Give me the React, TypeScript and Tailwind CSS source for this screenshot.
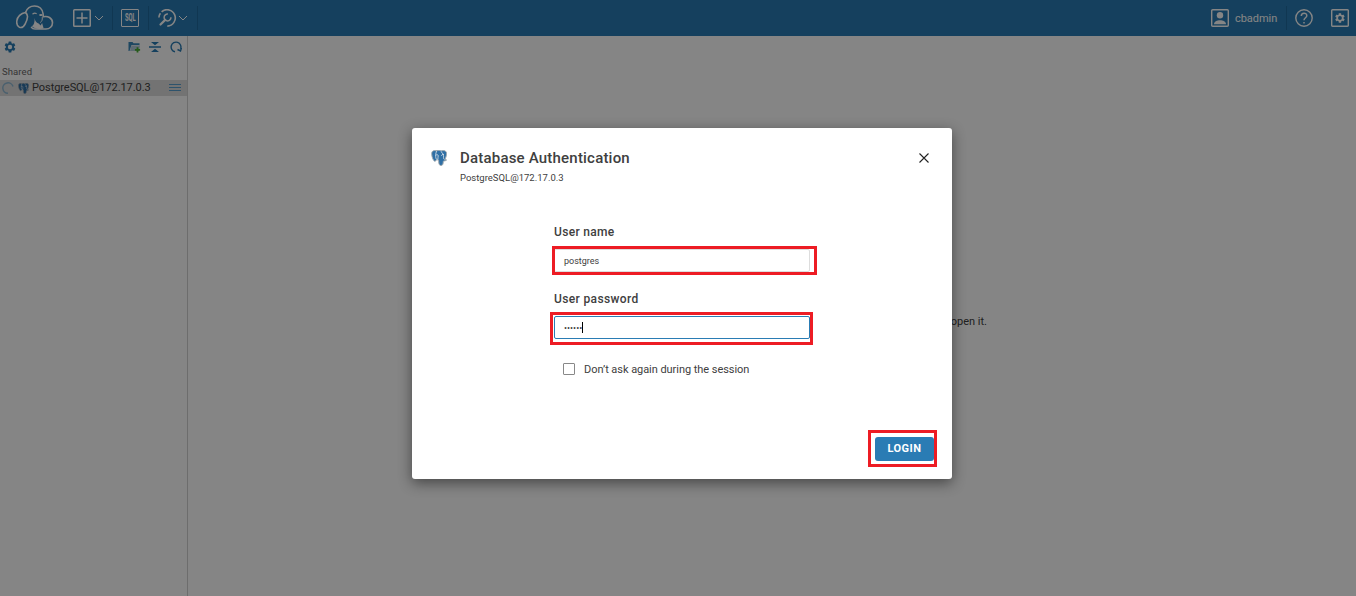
import React from 'react';

const GEAR =
  'M19.4 13c.04-.3.06-.6.06-1s-.02-.7-.07-1l2.1-1.6a.5.5 0 0 0 .12-.64l-2-3.46a.5.5 0 0 0-.6-.22l-2.5 1a7.3 7.3 0 0 0-1.7-.98l-.37-2.65A.5.5 0 0 0 14 2h-4a.5.5 0 0 0-.5.42L9.12 5.1a7.6 7.6 0 0 0-1.7.98l-2.48-1a.5.5 0 0 0-.6.22l-2 3.46a.5.5 0 0 0 .12.64L4.57 11a8 8 0 0 0 0 2l-2.1 1.65a.5.5 0 0 0-.13.64l2 3.46c.12.22.39.3.6.22l2.5-1c.52.4 1.08.73 1.7.98l.37 2.65c.04.24.25.4.5.4h4c.24 0 .45-.17.48-.4l.38-2.65a7.3 7.3 0 0 0 1.7-.98l2.48 1c.22.08.48 0 .6-.22l2-3.46a.5.5 0 0 0-.12-.64zM12 16a4 4 0 1 1 0-8 4 4 0 0 1 0 8z';

function Logo() {
  return (
    <svg width="38" height="26" viewBox="0 0 38 26" fill="none" stroke="#fff" strokeWidth="1.6" strokeLinecap="round" strokeLinejoin="round">
      <path d="M9.500 7.500C11 3.500 14.500 1 18.500 1c4.700 0 8 3.200 8.600 7.800l.1 3c4.500-1.300 9.300 1.300 9.300 6 0 3.700-2.900 6.200-6.500 6.200H19c-1.600 0-2.800-.5-3.500-1.600" />
      <path d="M9.500 7.500C5 8.200 1.200 11.500.8 16c-.3 3 .7 5.500 2.600 6.200 2.400.8 4.600-.8 5.800-3.400 1.200-2.400 2.400-4.800 2.300-7.300-.1-1.500-.7-3-2-4" />
      <path d="M17 8.800c1-.9 2.200-.9 3.200-.3" strokeWidth="1.300" />
      <path d="M23 9.700c1-.9 3.300-.8 3.500.2.100 1.300-2.800 2-3.500-.2z" fill="#fff" stroke="none" />
      <path d="M26.300 12.500c.2 2.500-.4 3.800-1.700 4.800" strokeWidth="1" />
      <path d="M18.600 13c.3 2.700 1.700 5 4 5.500l2 2 1.500-2.500 1.500 5.300c-4 1.500-8.500.6-11.800-2 2-.8 3-3.800 2.800-8.300z" fill="#fff" stroke="none" />
    </svg>
  );
}

function Elephant({ size }: { size: number }) {
  return (
    <svg width={size} height={size} viewBox="0 0 16 16" strokeLinecap="round" strokeLinejoin="round">
      <path d="M5 .7C2.300-.1.400 1.500.700 4.200c.2 2.700 1.400 6.500 3 7 .8.200 1.500-.8 2.200-1.600.6.400 1.200.500 1.700.400.100 1.900 0 5.400 2.100 5.500 2.400.1 2.500-2 2.600-4.300l2.700-.7c1-.6.2-1.100-1.100-1.200C15 7.500 16 4.200 15.500 2.500 14.700.5 12.400.2 10.600.8 9 .2 7 .2 5 .700z" fill="#2f6fa5" stroke="#a3abb0" strokeWidth="1" />
      <path d="M5.600 1.400C4.300 3.500 4.700 6 4.800 7.600c0 1 .5 1.700 1.200 1.800M9.900 1.400c1.700 1.300 2.700 3.500 2.700 5.500-.1 1-.3 1.700.5 2.400M5 5c1-.6 2-.4 2.200.6.2 1.300-.5 2.200-.4 3.500M12.500 4.500c-1-.2-1.800.1-1.900.8" fill="none" stroke="#e3e9ee" strokeWidth=".8" />
    </svg>
  );
}

function Chevron() {
  return (
    <svg width="10" height="6" viewBox="0 0 10 6" fill="none" stroke="#fff" strokeWidth="1">
      <path d="M1 1l4 4 4-4" />
    </svg>
  );
}

function Divider() {
  return <span className="h-6 w-px bg-[#206a9d]" />;
}

function Header() {
  return (
    <header className="flex h-9 shrink-0 items-center bg-[#2a7cb4] text-white">
      <div className="ml-4 w-[57px]"><Logo /></div>
      <div className="flex w-[39px] items-center gap-[3px]">
        <svg width="18" height="18" viewBox="0 0 18 18" fill="none" stroke="#fff" strokeWidth="1.500">
          <rect x=".75" y=".75" width="16.500" height="16.500" rx=".8" />
          <path d="M9 3.500v11M3.500 9h11" />
        </svg>
        <Chevron />
      </div>
      <Divider />
      <div className="ml-2 flex h-[18px] w-[18px] items-center justify-center rounded-[1px] border-[1.500px] border-white">
        <span className="inline-block scale-x-[.58] scale-y-110 text-[10px] leading-none font-bold">SQL</span>
      </div>
      <div className="ml-[9px] flex"><Divider /></div>
      <div className="ml-[9px] flex w-[39px] items-center gap-px">
        <svg width="19" height="18" viewBox="0 0 19 18" fill="none" stroke="#fff" strokeWidth="1.600" strokeLinecap="butt">
          <path d="M.9 8.500A8.200 8.200 0 0 1 2.400 4.200M3.600 2.800A8.200 8.200 0 1 1 9.300 17.100" />
          <path d="M12.900 8.200A3.400 3.400 0 1 1 9.900 5.100" strokeWidth="1.500" />
          <path d="M7.200 10.900L2.500 15.500" strokeWidth="2.200" strokeLinecap="round" />
        </svg>
        <Chevron />
      </div>
      <Divider />
      <div className="ml-auto flex items-center">
        <svg width="18" height="18" viewBox="0 0 18 18" fill="none" stroke="#fff" strokeWidth="1.400">
          <rect x=".7" y=".7" width="16.600" height="16.600" rx="1" />
          <circle cx="9" cy="6.300" r="3.200" fill="#fff" stroke="none" />
          <path d="M3 15.300c0-5.400 12-5.400 12 0z" fill="#fff" stroke="none" />
        </svg>
        <span className="ml-[6px] w-[51px] pt-[2px] text-[11px] tracking-[-.05px]">cbadmin</span>
        <Divider />
        <svg className="ml-2" width="18" height="18" viewBox="0 0 18 18" fill="none" stroke="#fff" strokeWidth="1.400">
          <circle cx="9" cy="9" r="8.200" />
          <path d="M6.300 7c0-3.700 5.500-3.700 5.500-.3C11.800 8.800 9 8.800 9 11.300M9 12.900v1.500" strokeWidth="1.500" />
        </svg>
        <div className="mr-[9px] ml-[9px]"><Divider /></div>
        <svg className="mr-[7px]" width="18" height="18" viewBox="0 0 18 18">
          <rect x=".7" y=".7" width="16.600" height="16.600" rx=".8" fill="none" stroke="#fff" strokeWidth="1.400" />
          <path d={GEAR} fill="#fff" transform="translate(3.200 3.200) scale(.48)" />
        </svg>
      </div>
    </header>
  );
}

function Sidebar() {
  return (
    <aside className="w-[188px] shrink-0 border-r border-[#d2d2d2]">
      <div className="flex h-[22px] items-center text-[#2a7cb4]">
        <svg className="ml-1" width="12" height="12" viewBox="1 1 22 22" fill="currentColor"><path d={GEAR} /></svg>
        <div className="mr-[5px] ml-auto flex items-center gap-[9px]">
          <svg className="-mr-px" width="13" height="12" viewBox="0 0 13 12">
            <path d="M.500 10V1h4l1 1.300h6V4H3.500L1.500 10z" fill="#3b88bb" />
            <path d="M3.500 4.500H12L11 10H2z" fill="#b5cedd" />
            <path d="M9.500 6.200v5.200M6.900 8.800h5.200" stroke="#4bae32" strokeWidth="1.800" />
          </svg>
          <svg width="12" height="12" viewBox="0 0 12 12" fill="currentColor">
            <path d="M0 5.300h12v1.400H0zM2 1h8L6 4.300zM6 7.700L10 11H2z" />
          </svg>
          <svg width="12" height="12" viewBox="0 0 12 12" fill="none" stroke="currentColor" strokeWidth="1.400">
            <path d="M5 10.800A4.900 4.900 0 1 1 10.600 7.800M7.500 8.500l3 1.500 1-3.200" />
          </svg>
        </div>
      </div>
      <div className="h-[22px] pt-[6px] pl-[2px] text-[9.500px] leading-[15px] tracking-[.1px] text-[#686868]">Shared</div>
      <div className="flex h-4 items-center bg-[#dcdcdc] text-[#404040]">
        <svg className="ml-[2px]" width="12" height="12" viewBox="0 0 12 12" fill="none" stroke="#8fb8d3" strokeWidth="1.500">
          <path d="M6 11.200A5.200 5.200 0 1 1 11 4.500" />
        </svg>
        <span className="ml-1"><Elephant size={11} /></span>
        <span className="ml-[3px] h-4 text-[11px] leading-[15px] tracking-[-.06px] whitespace-nowrap">PostgreSQL@172.17.0.3</span>
        <svg className="mr-[6px] ml-auto" width="12" height="8" viewBox="0 0 12 8" stroke="#58a0d0" strokeWidth="1">
          <path d="M0 .5h12M0 3.500h12M0 6.500h12" />
        </svg>
      </div>
    </aside>
  );
}

function Marker({ className }: { className: string }) {
  return <span className={`pointer-events-none absolute border-[3px] border-[#ed1c24] ${className}`} />;
}

function AuthDialog() {
  return (
    <section role="dialog" aria-label="Database Authentication" className="flex h-[351px] w-[540px] flex-col rounded-[3px] bg-white text-[#404040] shadow-[0_4px_14px_rgba(0,0,0,.48)]">
      <div className="flex h-[97px] items-start pt-[21px] pl-[19px]">
        <div className="mt-px w-[17px]"><Elephant size={16} /></div>
        <div className="ml-3">
          <h1 className="text-[15px] leading-[18px] font-medium tracking-[.2px]">Database Authentication</h1>
          <p className="mt-1 text-[9.500px] leading-[13px]">PostgreSQL@172.17.0.3</p>
        </div>
        <button className="mt-1 mr-[23px] ml-auto" aria-label="Close">
          <svg width="10" height="10" viewBox="0 0 10 10" stroke="#222" strokeWidth="1.100"><path d="M.5.5l9 9M9.500.5l-9 9" /></svg>
        </button>
      </div>
      <form className="ml-[142px] w-[256px]" onSubmit={(event) => event.preventDefault()}>
        <label className="block text-xs leading-[14px] font-medium tracking-[.32px]">User name</label>
        <div className="relative mt-[10px] flex h-[23px] items-center rounded-[2px] border border-[#ddd] pl-[9px] text-[9px]">
          <span className="pt-[2px]">postgres</span>
          <Marker className="top-[-4px] left-[-3px] h-[29px] w-[265px]" />
        </div>
        <label className="mt-[20px] block text-xs leading-[14px] font-medium tracking-[.36px]">User password</label>
        <div className="relative mt-[10px] flex h-[23px] items-center rounded-[2px] border border-[#2a7cb4] pl-[9px]">
          <span className="text-[9px] leading-3">••••••</span>
          <span className="h-[11px] w-px bg-black" />
          <Marker className="top-[-5px] left-[-5px] h-[33px] w-[263px]" />
        </div>
        <label className="mt-6 ml-[9px] flex h-3 items-center text-[11px] leading-[14px] whitespace-nowrap">
          <span className="mr-[9px] h-3 w-3 rounded-[1px] border border-[#888]" />
          <span className="pt-[2px] tracking-[-.05px]">Don’t ask again during the session</span>
        </label>
      </form>
      <div className="relative mt-auto mr-[18px] mb-[18px] self-end">
        <button className="block h-6 w-[59px] rounded-[3px] bg-[#2a7cb4] text-[11px] font-bold tracking-[.5px] text-white">LOGIN</button>
        <Marker className="top-[-7px] left-[-7px] h-[37px] w-[69px]" />
      </div>
    </section>
  );
}

export default function App() {
  return (
    <div className="relative flex h-[596px] flex-col overflow-hidden bg-white font-[Roboto,sans-serif]">
      <Header />
      <div className="flex min-h-0 flex-1">
        <Sidebar />
        <main className="flex-1 pt-[279px] pr-[369px] text-right text-[11px] leading-[14px] text-[#404040]">open it.</main>
      </div>
      <div className="absolute inset-0 flex items-start bg-black/48 pt-32 pl-[412px]">
        <AuthDialog />
      </div>
    </div>
  );
}
